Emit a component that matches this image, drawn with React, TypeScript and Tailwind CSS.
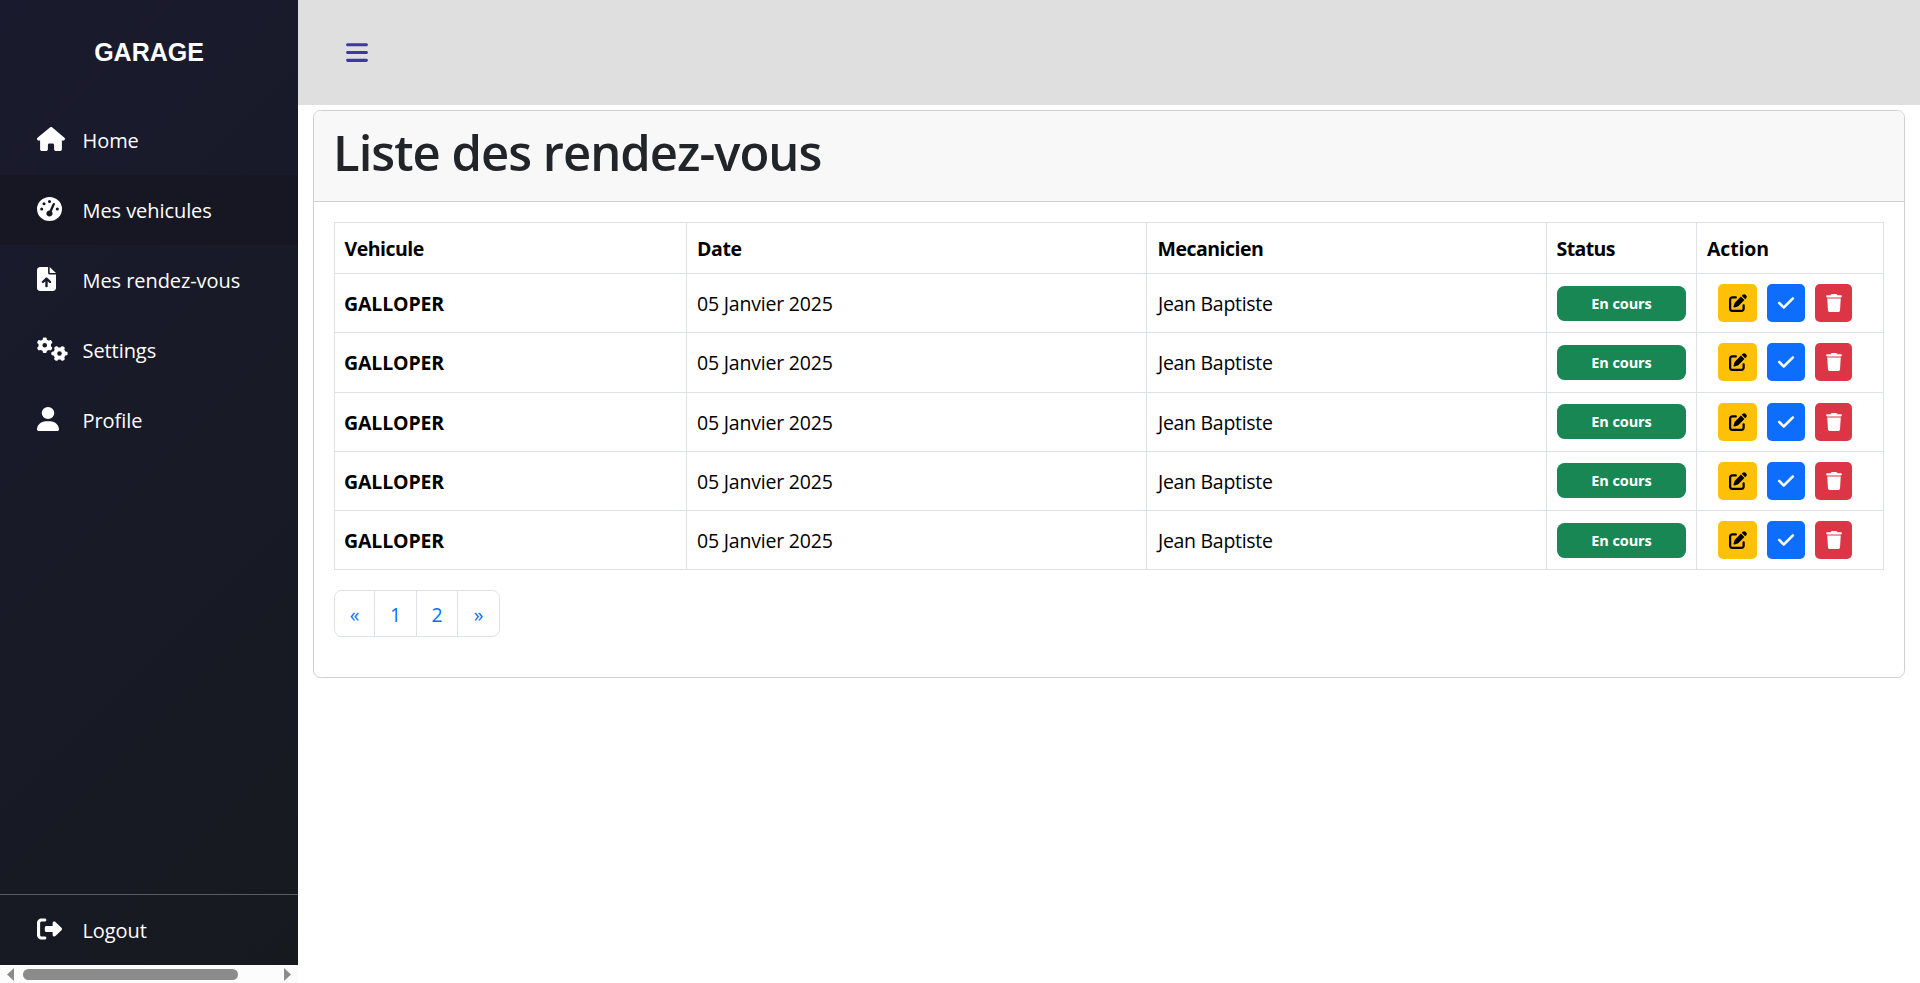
import type { IconType } from "react-icons";
import {
  FaBars,
  FaCheck,
  FaFileArrowUp,
  FaGaugeHigh,
  FaGears,
  FaHouse,
  FaPenToSquare,
  FaRightFromBracket,
  FaTrash,
  FaUser,
} from "react-icons/fa6";

type NavEntry = { label: string; icon: IconType; width: string; active?: boolean };

const navEntries: NavEntry[] = [
  { label: "Home", icon: FaHouse, width: "w-[28px]" },
  { label: "Mes vehicules", icon: FaGaugeHigh, width: "w-[25px]", active: true },
  { label: "Mes rendez-vous", icon: FaFileArrowUp, width: "w-[19px]" },
  { label: "Settings", icon: FaGears, width: "w-[31px]" },
  { label: "Profile", icon: FaUser, width: "w-[22px]" },
];

const rows = [
  { id: 1, height: "h-[59px]", badgeTop: "pt-[12px]" },
  { id: 2, height: "h-[60px]", badgeTop: "pt-[12px]" },
  { id: 3, height: "h-[59px]", badgeTop: "pt-[11px]" },
  { id: 4, height: "h-[59px]", badgeTop: "pt-[11px]" },
  { id: 5, height: "h-[59px]", badgeTop: "pt-[12px]" },
];

const columns = "grid grid-cols-[352px_460px_400px_150px_187px]";

function NavItem({ label, icon: Icon, width, active }: NavEntry) {
  return (
    <a className={`flex h-[70px] items-start pl-[37px] text-white ${active ? "bg-[#161722]" : ""}`}>
      <span className="w-[45.5px] shrink-0 pt-[22px]">
        <Icon className={`h-[24px] ${width}`} preserveAspectRatio="none" />
      </span>
      <span className="pt-[21px] text-[20px] leading-[30px] tracking-[-0.07px]">{label}</span>
    </a>
  );
}

function Sidebar() {
  return (
    <aside className="flex h-[983px] w-[298px] shrink-0 flex-col bg-[#fcfcfc]">
      <div className="flex h-[965px] flex-col bg-linear-[135deg,#1a1a2e,#161a1f]">
        <h2 className="flex h-[105px] items-center justify-center font-['Liberation_Sans',sans-serif] text-[25px] font-bold text-white">
          GARAGE
        </h2>
        <nav className="flex flex-1 flex-col">
          {navEntries.map((entry) => (
            <NavItem key={entry.label} {...entry} />
          ))}
        </nav>
        <div className="border-t border-[#5a5b63]">
          <NavItem label="Logout" icon={FaRightFromBracket} width="w-[25px]" />
        </div>
      </div>
      <div className="flex h-[18px] items-center pl-[7px] text-[#8b8b8b]">
        <svg className="h-[13px] w-[7px]" viewBox="0 0 7 13" fill="currentColor">
          <path d="M7 0v13L0 6.5z" />
        </svg>
        <div className="mx-[9px] flex-1">
          <div className="h-[11px] w-[215px] rounded-full bg-[#8b8b8b]" />
        </div>
        <svg className="mr-[7px] h-[13px] w-[7px]" viewBox="0 0 7 13" fill="currentColor">
          <path d="M0 0v13l7-6.5z" />
        </svg>
      </div>
    </aside>
  );
}

const head = "border-r border-[#dee2e6] pt-[11px] font-bold leading-[30px]";
const cell = "border-r border-[#dee2e6] pt-[15px] leading-[30px]";

function AppointmentTable() {
  return (
    <div className="w-[1550px] border-l border-t border-[#dee2e6] text-[19.5px] text-black">
      <div className={`${columns} h-[51px] border-b border-[#dee2e6]`}>
        <div className={`${head} pl-[9.5px] tracking-[-0.5px]`}>Vehicule</div>
        <div className={`${head} pl-[10px] tracking-[-0.4px]`}>Date</div>
        <div className={`${head} pl-[10.5px] tracking-[-0.5px]`}>Mecanicien</div>
        <div className={`${head} pl-[9.5px] tracking-[-0.6px]`}>Status</div>
        <div className={`${head} pl-[10px] tracking-[-0.15px]`}>Action</div>
      </div>
      {rows.map((row) => (
        <div key={row.id} className={`${columns} ${row.height} border-b border-[#dee2e6]`}>
          <div className={`${cell} pl-[9px] font-bold tracking-[-0.15px]`}>GALLOPER</div>
          <div className={`${cell} pl-[10px] tracking-[-0.2px]`}>05 Janvier 2025</div>
          <div className={`${cell} pl-[11px] tracking-[-0.3px]`}>Jean Baptiste</div>
          <div className={`border-r border-[#dee2e6] pl-[10px] ${row.badgeTop}`}>
            <span className="flex h-[35px] w-[129px] items-center justify-center rounded-[7.5px] bg-[#198754] text-[14.5px] font-bold tracking-[-0.1px] text-white">
              En cours
            </span>
          </div>
          <div className="flex items-start gap-[10px] border-r border-[#dee2e6] pl-[21px] pt-[10px]">
            <button className="flex h-[38px] w-[39px] items-center justify-center rounded-[5px] bg-[#ffc107] text-black">
              <FaPenToSquare className="size-[18px]" />
            </button>
            <button className="flex h-[38px] w-[38px] items-center justify-center rounded-[5px] bg-[#0d6efd] text-white">
              <FaCheck className="h-[18px] w-[18px]" stroke="currentColor" strokeWidth="14" />
            </button>
            <button className="flex h-[38px] w-[37px] items-center justify-center rounded-[5px] bg-[#dc3545] text-white">
              <FaTrash className="h-[18px] w-[16px]" />
            </button>
          </div>
        </div>
      ))}
    </div>
  );
}

function Pagination() {
  return (
    <div className="mt-5 flex h-[47px] w-[166px] overflow-hidden rounded-[7.5px] border border-[#dee2e6] text-[19.5px] leading-[30px] text-[#0d6efd]">
      <a className="w-[40px] border-r border-[#dee2e6] pt-[9px] text-center">«</a>
      <a className="w-[42px] border-r border-[#dee2e6] pt-[9px] text-center">1</a>
      <a className="w-[41px] border-r border-[#dee2e6] pt-[9px] text-center">2</a>
      <a className="flex-1 pt-[9px] text-center">»</a>
    </div>
  );
}

export default function App() {
  return (
    <div className="flex h-[983px] w-full overflow-hidden bg-white font-['Open_Sans',sans-serif]">
      <Sidebar />
      <main className="flex min-w-0 flex-1 flex-col">
        <header className="flex h-[105px] items-center bg-[#dfdfdf] pl-[48px]">
          <FaBars className="h-[25px] w-[22px] text-[#3f38a3]" />
        </header>
        <section className="ml-[15px] mt-[5px] h-[568px] w-[1592px] overflow-hidden rounded-[7.5px] border border-[#cfd0d1] bg-white">
          <div className="h-[91px] border-b border-[#cfd0d1] bg-[#f8f8f8] pl-[19px] pt-[11px]">
            <h1 className="text-[49px] font-semibold leading-[60px] tracking-[-1px] text-[#212529]">
              Liste des rendez-vous
            </h1>
          </div>
          <div className="pl-5 pt-5">
            <AppointmentTable />
            <Pagination />
          </div>
        </section>
      </main>
    </div>
  );
}
